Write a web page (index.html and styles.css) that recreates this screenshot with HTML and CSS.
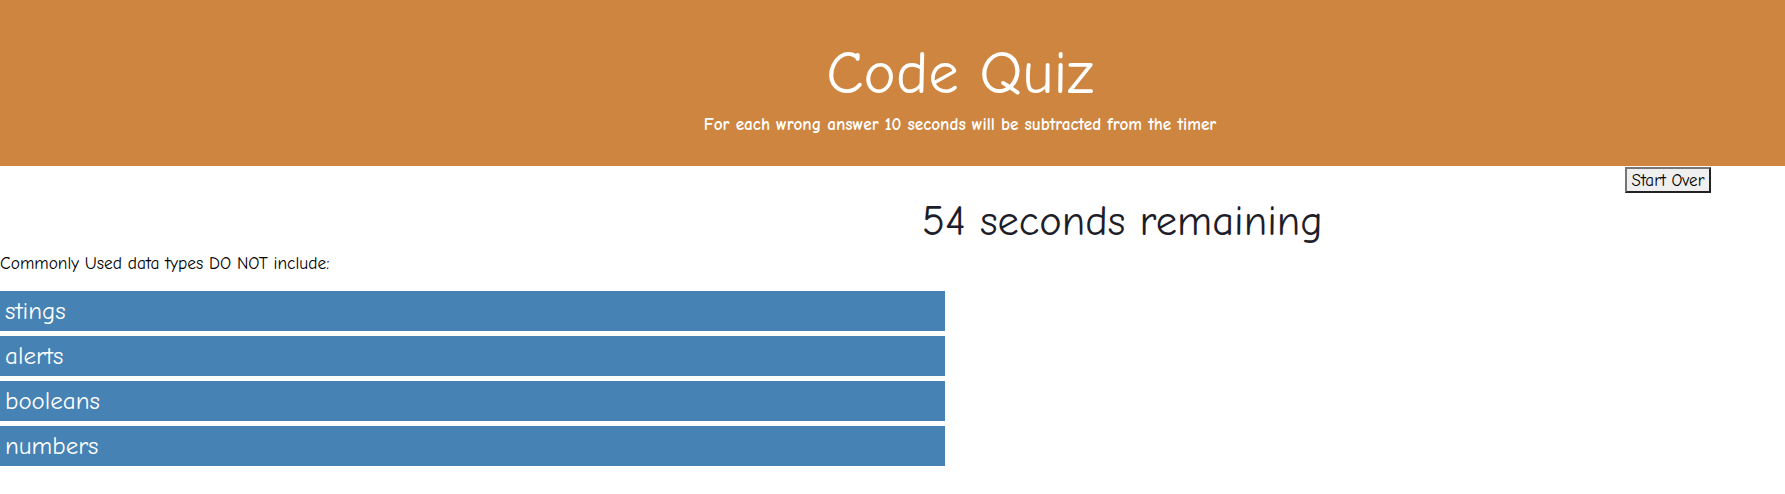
FILE: index.html
```html
<!DOCTYPE html>
<html lang="en">
<head>
<meta charset="utf-8">
<title>Code Quiz</title>
<link rel="stylesheet" href="styles.css">
</head>
<body>
<header class="hero">
  <h1 class="hero-title">Code Quiz</h1>
  <p class="hero-sub">For each wrong answer 10 seconds will be subtracted from the timer</p>
</header>
<div class="toolbar">
  <button class="restart" type="button">Start Over</button>
</div>
<h2 class="timer">54 seconds remaining</h2>
<main class="quiz">
  <p class="question">Commonly Used data types DO NOT include:</p>
  <div class="answers">
    <button class="answer" type="button">stings</button>
    <button class="answer" type="button">alerts</button>
    <button class="answer" type="button">booleans</button>
    <button class="answer" type="button">numbers</button>
  </div>
</main>
</body>
</html>
```
FILE: styles.css
```css
* { box-sizing: border-box; }
html, body { margin: 0; padding: 0; }
body {
  font-family: "Comic Sans MS", "Comic Neue", cursive, sans-serif;
  color: #1e1e1e;
  background: #fff;
}
.hero {
  background: #cd853f;
  height: 166px;
  text-align: center;
  color: #fff;
  padding-top: 40px;
  padding-left: 135px;
}
.hero-title {
  margin: 0;
  font-size: 61px;
  font-weight: normal;
  line-height: 66px;
}
.hero-sub {
  margin: 9px 0 0;
  font-size: 17.2px;
  font-weight: bold;
  line-height: 20px;
}
.toolbar {
  display: flex;
  justify-content: flex-end;
  padding-right: 74px;
  height: 28px;
}
.restart {
  font-family: inherit;
  font-size: 17px;
  color: #000;
  background: #efefef;
  border: 2px solid;
  border-color: #767676 #222 #222 #767676;
  height: 26px;
  width: 86px;
  padding: 0 2px;
  margin-top: 1px;
  white-space: nowrap;
}
.timer {
  margin: 0;
  padding-left: 460px;
  text-align: center;
  font-size: 42.5px;
  font-weight: normal;
  line-height: 56px;
  color: #1e1e2a;
}
.question {
  margin: 3px 0 0;
  font-size: 17.4px;
  line-height: 20px;
  color: #000;
}
.answers {
  margin-top: 18px;
  width: 945px;
  display: flex;
  flex-direction: column;
  gap: 5px;
}
.answer {
  display: block;
  width: 100%;
  height: 40px;
  border: 0;
  background: #4682b4;
  color: #fff;
  font-family: inherit;
  font-size: 25px;
  text-align: left;
  padding: 0 5px;
  line-height: 40px;
}
```
